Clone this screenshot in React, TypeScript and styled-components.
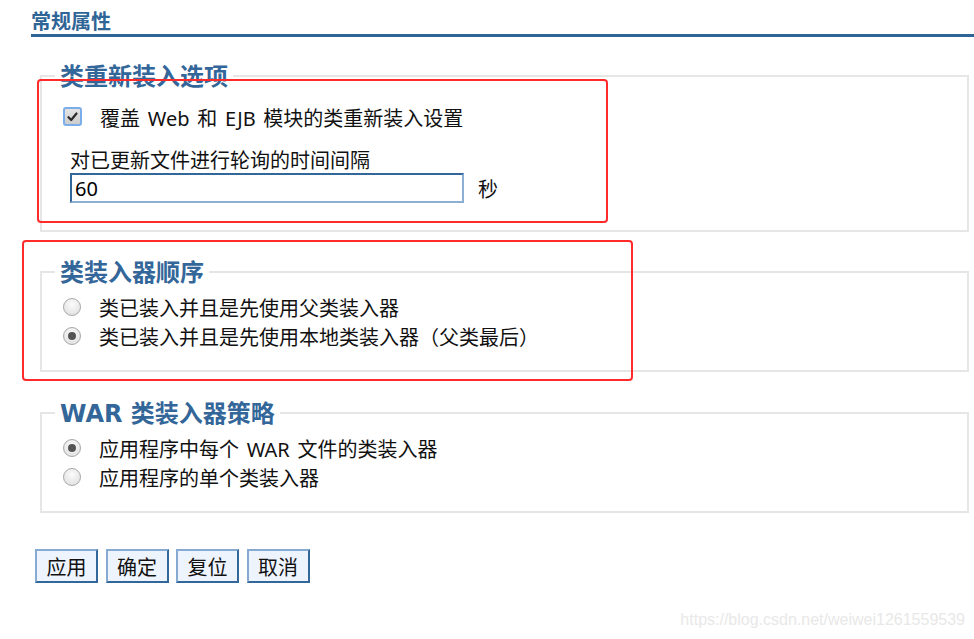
import React, { useState } from "react";
import styled, { createGlobalStyle } from "styled-components";

const GlobalStyle = createGlobalStyle`
  body {
    margin: 0;
    background: #fff;
    font-family: "Noto Sans", "Noto Sans CJK SC", sans-serif;
    color: #111;
  }
`;

const Page = styled.div`
  position: relative;
  box-sizing: border-box;
  min-height: 639px;
  padding: 9px 0 0 31px;
  overflow: hidden;
`;

const Header = styled.h2`
  margin: 0;
  font-size: 20px;
  font-weight: bold;
  line-height: 25px;
  color: #2f6496;
  border-bottom: 3px solid #2f6496;
`;

const Group = styled.fieldset<{ $top: number; $bottom?: number }>`
  margin: ${(p) => p.$top}px 5px 0 9px;
  padding: 8px 20px ${(p) => p.$bottom ?? 18}px 13px;
  border: 2px solid #e6e6e6;
  min-width: 0;
`;

const Legend = styled.legend`
  padding: 0 5px;
  font-size: 24px;
  font-weight: bold;
  line-height: 28px;
  color: #336699;
  word-spacing: 2px;
`;

// the latin part of a legend is drawn wider in the original
const LegendLatin = styled.span`
  font-family: "DejaVu Sans", "Noto Sans", sans-serif;
  line-height: 0;
`;

const Body = styled.div`
  margin-left: 8px;
`;

const OptionRow = styled.label<{ $height?: number; $gapTop?: number }>`
  display: flex;
  align-items: center;
  height: ${(p) => p.$height ?? 29}px;
  margin-top: ${(p) => p.$gapTop ?? 0}px;
  font-size: 20px;
  line-height: 26px;
  word-spacing: 2.5px;
  white-space: pre;
  cursor: default;
`;

const Box = styled.span`
  box-sizing: border-box;
  flex: none;
  width: 19px;
  height: 19px;
  margin: 0 18px 5px 0;
  border: 2px solid #7aaeea;
  border-radius: 3px;
  background: linear-gradient(#e4e4e4, #cdcdcd);
  display: flex;
  align-items: center;
  justify-content: center;
`;

const Dot = styled.span<{ $on: boolean }>`
  box-sizing: border-box;
  flex: none;
  width: 18px;
  height: 18px;
  margin: 0 18px 3px 0;
  border-radius: 50%;
  border: 1px solid #a8a8a8;
  background: radial-gradient(circle at 50% 35%, #fbfbfb, #dcdcdc);
  display: flex;
  align-items: center;
  justify-content: center;

  &::after {
    content: "";
    display: ${(p) => (p.$on ? "block" : "none")};
    width: 8px;
    height: 8px;
    border-radius: 50%;
    background: #555;
  }
`;

const Field = styled.div`
  margin: 14px 0 0 7px;
`;

const FieldLabel = styled.div`
  font-size: 20px;
  line-height: 25px;
`;

const FieldLine = styled.div`
  display: flex;
  align-items: center;
`;

const TextInput = styled.input`
  box-sizing: border-box;
  width: 394px;
  height: 30px;
  padding: 0 3px;
  font: inherit;
  font-size: 20px;
  color: #000;
  border-style: solid;
  border-width: 2px;
  border-color: #336699 #8cb0d3 #8cb0d3 #336699;
  outline: none;
`;

const Unit = styled.span`
  margin-left: 14px;
  font-size: 20px;
`;

const Buttons = styled.div`
  display: flex;
  gap: 7.5px;
  margin: 36px 0 0 4px;
`;

const Button = styled.button`
  box-sizing: border-box;
  width: 63px;
  height: 34px;
  padding: 0;
  font: inherit;
  font-size: 20px;
  color: #111;
  background: #eef4fe;
  border-style: solid;
  border-width: 2px;
  border-color: #86aad2 #336699 #336699 #86aad2;
`;

const Mark = styled.div<{ $x: number; $y: number; $w: number; $h: number }>`
  position: absolute;
  left: ${(p) => p.$x}px;
  top: ${(p) => p.$y}px;
  width: ${(p) => p.$w}px;
  height: ${(p) => p.$h}px;
  box-sizing: border-box;
  border: 2px solid #ff2b2b;
  border-radius: 4px;
  pointer-events: none;
`;

const Watermark = styled.div`
  position: absolute;
  right: 9px;
  bottom: 10px;
  font-family: "Liberation Sans", Arial, sans-serif;
  font-size: 16px;
  color: #e8e8e8;
`;

const Check = () => (
  <svg width="11" height="10" viewBox="0 0 11 10">
    <path d="M1.5 5.2 L4.2 8 L9.5 1.5" fill="none" stroke="#2a2a2a" strokeWidth="2.2" strokeLinecap="round" strokeLinejoin="round" />
  </svg>
);

const loaderOptions = ["类已装入并且是先使用父类装入器", "类已装入并且是先使用本地类装入器（父类最后）"];
const warOptions = ["应用程序中每个 WAR 文件的类装入器", "应用程序的单个类装入器"];

export default function App() {
  const [interval, setInterval] = useState("60");
  const [order, setOrder] = useState(1);
  const [policy, setPolicy] = useState(0);

  return (
    <Page>
      <GlobalStyle />
      <Header>常规属性</Header>

      <Group $top={25} $bottom={27}>
        <Legend>类重新装入选项</Legend>
        <Body>
          <OptionRow $height={30} $gapTop={6}>
            <Box>
              <Check />
            </Box>
            覆盖 Web 和 EJB 模块的类重新装入设置
          </OptionRow>
          <Field>
            <FieldLabel>对已更新文件进行轮询的时间间隔</FieldLabel>
            <FieldLine>
              <TextInput value={interval} onChange={(e) => setInterval(e.target.value)} />
              <Unit>秒</Unit>
            </FieldLine>
          </Field>
        </Body>
      </Group>

      <Group $top={26}>
        <Legend>类装入器顺序</Legend>
        <Body>
          {loaderOptions.map((text, i) => (
            <OptionRow key={text} onClick={() => setOrder(i)}>
              <Dot $on={order === i} />
              {text}
            </OptionRow>
          ))}
        </Body>
      </Group>

      <Group $top={27}>
        <Legend>
          <LegendLatin>WAR</LegendLatin> 类装入器策略
        </Legend>
        <Body>
          {warOptions.map((text, i) => (
            <OptionRow key={text} onClick={() => setPolicy(i)}>
              <Dot $on={policy === i} />
              {text}
            </OptionRow>
          ))}
        </Body>
      </Group>

      <Buttons>
        <Button>应用</Button>
        <Button>确定</Button>
        <Button>复位</Button>
        <Button>取消</Button>
      </Buttons>

      <Mark $x={37} $y={79} $w={571} $h={144} />
      <Mark $x={22} $y={240} $w={611} $h={141} />
      <Watermark>https://blog.csdn.net/weiwei1261559539</Watermark>
    </Page>
  );
}
